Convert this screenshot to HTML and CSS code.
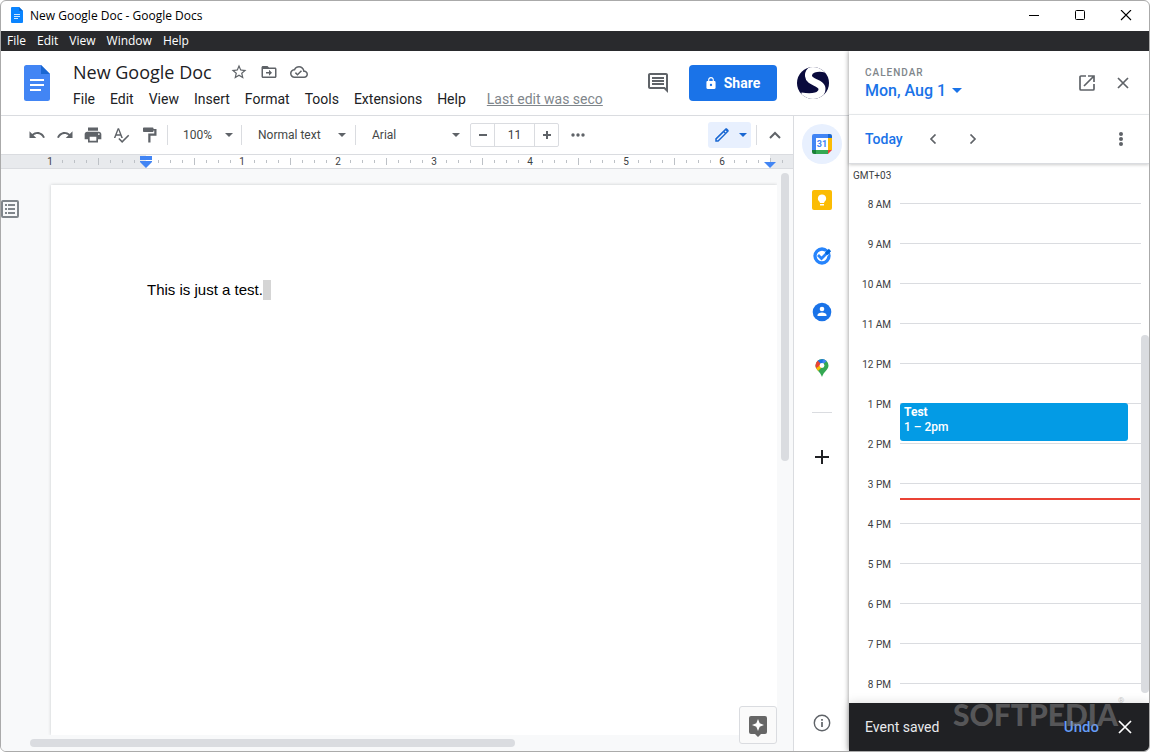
FILE: index.html
```html
<!DOCTYPE html>
<html lang="en">
<head>
<meta charset="utf-8">
<title>New Google Doc - Google Docs</title>
<link rel="stylesheet" href="styles.css">
</head>
<body>
<div class="window">
  <header class="titlebar">
    <svg class="app-icon" width="12" height="16" viewBox="0 0 12 16"><path fill="#0a84ff" d="M1 0h7l4 4v11a1 1 0 0 1-1 1H1a1 1 0 0 1-1-1V1a1 1 0 0 1 1-1z"/><path fill="#0b6bd3" d="M8 0l4 4H8z"/><path stroke="#cfe6ff" d="M3 7.500h6M3 9.500h6M3 11.500h4"/></svg>
    <span class="window-title">New Google Doc - Google Docs</span>
    <div class="window-controls">
      <button aria-label="Minimize"><svg width="12" height="12"><path stroke="#000" d="M1 5.500h10"/></svg></button>
      <button aria-label="Maximize"><svg width="12" height="12"><rect x="1.500" y=".5" width="9" height="9" rx="1" fill="none" stroke="#000"/></svg></button>
      <button aria-label="Close"><svg width="12" height="12"><path stroke="#000" stroke-width="1.100" d="M1 0l10 10M11 0L1 10"/></svg></button>
    </div>
  </header>
  <nav class="system-menu">
    <button>File</button><button>Edit</button><button>View</button><button>Window</button><button>Help</button>
  </nav>

  <div class="workspace">
    <main class="docs">
      <header class="docs-header">
        <svg class="docs-logo" width="26" height="36" viewBox="0 0 26 36"><path fill="#4285f4" d="M2.500 0H17l9 9v24.500a2.500 2.500 0 0 1-2.500 2.500h-21A2.500 2.500 0 0 1 0 33.500v-31A2.500 2.500 0 0 1 2.500 0z"/><path fill="#1967d2" d="M17 0l9 9h-9z"/><path stroke="#fff" stroke-width="2" d="M6 15h14M6 20h14M6 25h11"/></svg>
        <div class="doc-info">
          <div class="title-row">
            <h1>New Google Doc</h1>
            <button aria-label="Star"><svg width="18" height="18" viewBox="0 0 24 24"><path d="M22 9.240l-7.190-.620L12 2 9.190 8.630 2 9.240l5.460 4.730L5.820 21 12 17.270 18.180 21l-1.630-7.030L22 9.240zM12 15.400l-3.760 2.270 1-4.280-3.320-2.880 4.380-.380L12 6.100l1.710 4.040 4.380.380-3.320 2.880 1 4.280L12 15.400z"/></svg></button>
            <button aria-label="Move"><svg width="18" height="18" viewBox="0 0 24 24"><path d="M20 6h-8l-2-2H4c-1.100 0-2 .9-2 2v12c0 1.100.9 2 2 2h16c1.100 0 2-.9 2-2V8c0-1.100-.9-2-2-2zm0 12H4V8h16v10zm-8-1l4-4-4-4v3H8v2h4z"/></svg></button>
            <button aria-label="Saved to Drive"><svg width="18" height="18" viewBox="0 0 24 24"><path d="M19.350 10.040C18.670 6.590 15.640 4 12 4 9.110 4 6.600 5.640 5.350 8.040 2.340 8.360 0 10.910 0 14c0 3.310 2.690 6 6 6h13c2.760 0 5-2.240 5-5 0-2.640-2.050-4.780-4.650-4.960zM19 18H6c-2.210 0-4-1.790-4-4 0-2.050 1.530-3.760 3.560-3.970l1.070-.110.5-.950C8.080 7.140 9.940 6 12 6c2.620 0 4.880 1.860 5.390 4.430l.3 1.500 1.530.110c1.560.1 2.780 1.410 2.780 2.960 0 1.650-1.350 3-3 3zm-9-3.820l-2.090-2.090L6.500 13.500 10 17l6.010-6.010-1.410-1.410z"/></svg></button>
          </div>
          <nav class="docs-menu">
            <button>File</button><button>Edit</button><button>View</button><button>Insert</button><button>Format</button><button>Tools</button><button>Extensions</button><button>Help</button>
            <a href="#">Last edit was seco</a>
          </nav>
        </div>
        <div class="header-actions">
          <button class="icon" aria-label="Comments"><svg width="24" height="24" viewBox="0 0 24 24"><path d="M21.990 4c0-1.100-.89-2-1.990-2H4c-1.100 0-2 .9-2 2v12c0 1.100.9 2 2 2h14l4 4-.010-18zM20 4v13.170L18.830 16H4V4h16zM6 12h12v2H6zm0-3h12v2H6zm0-3h12v2H6z"/></svg></button>
          <button class="share"><svg width="10" height="12" viewBox="4 1 16 21"><path fill="#fff" d="M18 8h-1V6c0-2.760-2.240-5-5-5S7 3.240 7 6v2H6c-1.100 0-2 .9-2 2v10c0 1.100.9 2 2 2h12c1.100 0 2-.9 2-2V10c0-1.100-.9-2-2-2zm-6 9c-1.100 0-2-.9-2-2s.9-2 2-2 2 .9 2 2-.9 2-2 2zM15 8H9V6c0-1.700 1.300-3 3-3s3 1.300 3 3z"/></svg>Share</button>
          <button class="icon" aria-label="Account"><svg width="32" height="32" viewBox="0 0 32 32"><clipPath id="disc"><circle cx="16" cy="16" r="16"/></clipPath><g clip-path="url(#disc)"><path fill="#0a0b3d" d="M0 0h32v32H0z"/><path fill="none" stroke="#fff" stroke-width="7" d="M29 2C20 0 11 2 11.500 9 12 16 25 15 25 22c0 7-9 9-21 7"/></g></svg></button>
        </div>
      </header>

      <div class="docs-body">
        <section class="editor">
          <div class="toolbar">
            <div class="tool-icons">
              <button aria-label="Undo"><svg width="18" height="18" viewBox="0 0 24 24"><path d="M12.500 8c-2.650 0-5.050.990-6.900 2.600L2 7v9h9l-3.620-3.620c1.390-1.160 3.160-1.880 5.120-1.880 3.540 0 6.550 2.310 7.600 5.500l2.370-.780C21.080 11.030 17.150 8 12.500 8z"/></svg></button>
              <button aria-label="Redo"><svg width="18" height="18" viewBox="0 0 24 24"><path d="M18.400 10.600C16.550 8.990 14.150 8 11.500 8c-4.650 0-8.580 3.030-9.960 7.220L3.900 16c1.050-3.190 4.050-5.500 7.600-5.500 1.950 0 3.730.720 5.120 1.880L13 16h9V7l-3.600 3.600z"/></svg></button>
              <button aria-label="Print"><svg width="20" height="20" viewBox="0 0 24 24"><path d="M19 8H5c-1.660 0-3 1.340-3 3v6h4v4h12v-4h4v-6c0-1.660-1.340-3-3-3zm-3 11H8v-5h8v5zm3-7c-.550 0-1-.450-1-1s.450-1 1-1 1 .450 1 1-.450 1-1 1zm-1-9H6v4h12V3z"/></svg></button>
              <button aria-label="Spelling"><svg width="18" height="18" viewBox="0 0 24 24"><path d="M12.450 16h2.090L9.430 3H7.570L2.460 16h2.090l1.120-3h5.640l1.140 3zm-6.020-5L8.500 5.480 10.570 11H6.430zm15.160.590l-8.090 8.090L9.830 16l-1.410 1.410 5.090 5.090L23 13l-1.410-1.410z"/></svg></button>
              <button aria-label="Paint format"><svg width="18" height="18" viewBox="0 0 24 24"><path d="M18 4V3c0-.550-.450-1-1-1H5c-.550 0-1 .450-1 1v4c0 .550.450 1 1 1h12c.550 0 1-.450 1-1V6h1v4h-8v12h3v-9h8V4z"/></svg></button>
            </div>
            <button class="menu-button zoom">100%<svg width="8" height="4"><path d="M0 0h8L4 4z"/></svg></button>
            <button class="menu-button style">Normal text<svg width="8" height="4"><path d="M0 0h8L4 4z"/></svg></button>
            <button class="menu-button font">Arial<svg width="8" height="4"><path d="M0 0h8L4 4z"/></svg></button>
            <div class="size">
              <button aria-label="Decrease font size"><svg width="8" height="8"><path d="M0 3h8v2H0z"/></svg></button>
              <input type="text" value="11" aria-label="Font size">
              <button aria-label="Increase font size"><svg width="8" height="8"><path d="M0 3h3V0h2v3h3v2H5v3H3V5H0z"/></svg></button>
            </div>
            <button class="more" aria-label="More"><svg width="14" height="4"><circle cx="2" cy="2" r="1.700"/><circle cx="7" cy="2" r="1.700"/><circle cx="12" cy="2" r="1.700"/></svg></button>
            <button class="mode" aria-label="Editing mode"><svg width="18" height="18" viewBox="0 0 24 24"><path d="M20.410 4.940l-1.350-1.350c-.78-.78-2.050-.78-2.830 0L3 16.820V21h4.180L20.410 7.770c.79-.78.79-2.050 0-2.830zM6.400 19.100L5 19.130l.040-1.430 9.200-9.200 1.390 1.390zM16.900 8.700L15.400 7.200l1.300-1.300 1.500 1.500z"/></svg><svg width="8" height="4"><path d="M0 0h8L4 4z"/></svg></button>
            <button class="collapse" aria-label="Hide menus"><svg width="12" height="8"><path fill="none" stroke="#5f6368" stroke-width="2" d="M1 7l5-5 5 5"/></svg></button>
          </div>

          <div class="ruler">
            <svg width="0" height="0"><symbol id="ticks" viewBox="0 0 96 13"><path stroke="#bdc1c6" d="M.5 3v7M12.500 5v3M24.500 5v3M36.500 5v3M60.500 5v3M72.500 5v3M84.500 5v3"/></symbol><symbol id="ticks-start" viewBox="0 0 96 13"><path stroke="#bdc1c6" d="M60.500 5v3M72.500 5v3M84.500 5v3"/></symbol></svg>
            <div class="inch"><svg><use href="#ticks-start"/></svg><span>1</span></div>
            <div class="inch"><svg><use href="#ticks"/></svg><svg class="indent" width="12" height="12"><path fill="#4285f4" d="M0 0h12v4H0zM0 5h12v1l-6 6-6-6z"/></svg></div>
            <div class="inch"><svg><use href="#ticks"/></svg><span>1</span></div>
            <div class="inch"><svg><use href="#ticks"/></svg><span>2</span></div>
            <div class="inch"><svg><use href="#ticks"/></svg><span>3</span></div>
            <div class="inch"><svg><use href="#ticks"/></svg><span>4</span></div>
            <div class="inch"><svg><use href="#ticks"/></svg><span>5</span></div>
            <div class="inch"><svg><use href="#ticks"/></svg><span>6</span></div>
            <div class="inch outside"><svg><use href="#ticks"/></svg><svg class="right-indent" width="12" height="6"><path fill="#4285f4" d="M0 0h12L6 6z"/></svg></div>
          </div>

          <div class="canvas">
            <div class="gutter"><button aria-label="Show outline"><svg width="18" height="18"><rect x="1" y="1" width="16" height="16" rx="1" fill="none" stroke="#80868b" stroke-width="2"/><path stroke="#80868b" stroke-width="2" d="M4 5h2M7 5h7M4 9h2M7 9h7M4 13h2M7 13h7"/></svg></button></div>
            <article class="page"><p>This is just a test.<span class="caret"></span></p></article>
            <div class="vscroll"><div class="thumb"></div></div>
            <div class="hscroll"><div class="thumb"></div></div>
            <button class="explore" aria-label="Explore"><svg width="18" height="21" viewBox="0 0 18 21"><path fill="#666" d="M2 0h14a2 2 0 0 1 2 2v14a2 2 0 0 1-2 2h-4l-3 3-3-3H2a2 2 0 0 1-2-2V2a2 2 0 0 1 2-2z"/><path fill="#fff" d="M9 3l1.700 4.300L15 9l-4.300 1.700L9 15l-1.700-4.300L3 9l4.300-1.700z"/></svg></button>
          </div>
        </section>

        <aside class="side-apps">
          <button class="selected" aria-label="Calendar"><svg width="20" height="20" viewBox="0 0 20 20"><path fill="#4285f4" d="M2 0h14v4H4v12H0V2a2 2 0 0 1 2-2z"/><path fill="#1967d2" d="M16 0h2a2 2 0 0 1 2 2v2h-4z"/><path fill="#fbbc04" d="M16 4h4v12h-4z"/><path fill="#34a853" d="M4 16h12v4H4z"/><path fill="#188038" d="M0 16h4v4H2a2 2 0 0 1-2-2z"/><path fill="#ea4335" d="M16 16h4l-4 4z"/><path fill="#fff" d="M4 4h12v12H4z"/><text x="10" y="13" text-anchor="middle" class="cal-day">31</text></svg></button>
          <button aria-label="Keep"><svg width="20" height="20"><rect width="20" height="20" rx="2" fill="#fbbc04"/><path fill="#fff" d="M10 4.500a4 4 0 0 0-2.200 7.400V13h4.400v-1.100A4 4 0 0 0 10 4.500zM8 14h4v1.500H8z"/></svg></button>
          <button aria-label="Tasks"><svg width="20" height="20"><circle cx="10" cy="10" r="7" fill="none" stroke="#2684fc" stroke-width="3.300"/><path fill="none" stroke="#fff" stroke-width="5" d="M9 13l6-6"/><path fill="none" stroke="#2684fc" stroke-width="2.800" d="M6 9l3.500 3.500L17 5"/><path stroke="#0066da" stroke-width="3.200" d="M14 8l4-4"/></svg></button>
          <button aria-label="Contacts"><svg width="20" height="20"><circle cx="10" cy="10" r="9.300" fill="#1a73e8"/><circle cx="10" cy="7" r="2.300" fill="#fff"/><path fill="#fff" d="M5.500 14v-1c0-3.400 9-3.400 9 0v1z"/></svg></button>
          <button aria-label="Maps"><svg width="14" height="18" viewBox="0 0 14 18"><clipPath id="pin"><path d="M7 0a6.500 6.500 0 0 1 6.500 6.500C13.500 11 9 12 7 18 5 12 .5 11 .5 6.500A6.500 6.500 0 0 1 7 0z"/></clipPath><g clip-path="url(#pin)"><path fill="#34a853" d="M0 0h14v18H0z"/><path fill="#fbbc04" d="M0 15V9l8-5v3z"/><path fill="#ea4335" d="M0 0v10l7-5-5-5z"/><path fill="#1a73e8" d="M2 1l5 5 2-6z"/><path fill="#4285f4" d="M7 6l6-5-5-1z"/><circle cx="7" cy="6.500" r="2.400" fill="#fff"/></g></svg></button>
          <hr>
          <button aria-label="Get add-ons"><svg width="14" height="14"><path stroke="#202124" stroke-width="2" d="M0 7h14M7 0v14"/></svg></button>
          <button class="info" aria-label="Info"><svg width="18" height="18"><circle cx="9" cy="9" r="7.700" fill="none" stroke="#5f6368" stroke-width="1.400"/><path stroke="#5f6368" stroke-width="1.700" d="M9 8v5M9 5v1.700"/></svg></button>
        </aside>
      </div>
    </main>

    <aside class="calendar">
      <header class="cal-header">
        <div class="cal-titles">
          <h2>CALENDAR</h2>
          <button class="date">Mon, Aug 1<svg width="10" height="5"><path fill="#1a73e8" d="M0 0h10L5 5z"/></svg></button>
        </div>
        <button aria-label="Open in new tab"><svg width="16" height="16"><path fill="none" stroke="#5f6368" stroke-width="1.700" d="M7 1H2a1 1 0 0 0-1 1v12a1 1 0 0 0 1 1h12a1 1 0 0 0 1-1V9M9 1h6v6M15 1L5 11"/></svg></button>
        <button aria-label="Close"><svg width="12" height="12"><path stroke="#5f6368" stroke-width="1.700" d="M1 1l10 10M11 1L1 11"/></svg></button>
      </header>
      <div class="cal-nav">
        <button class="today">Today</button>
        <button aria-label="Previous day"><svg width="8" height="10"><path fill="none" stroke="#5f6368" stroke-width="1.700" d="M6.500 .5L2 5l4.500 4.500"/></svg></button>
        <button aria-label="Next day"><svg width="8" height="10"><path fill="none" stroke="#5f6368" stroke-width="1.700" d="M1.500 .5L6 5l-4.500 4.500"/></svg></button>
        <button class="options" aria-label="Options"><svg width="4" height="14"><circle cx="2" cy="2" r="2"/><circle cx="2" cy="7" r="2"/><circle cx="2" cy="12" r="2"/></svg></button>
      </div>
      <div class="schedule">
        <div class="zone">GMT+03</div>
        <div class="hours">
          <div class="hour">8 AM</div><div class="hour">9 AM</div><div class="hour">10 AM</div><div class="hour">11 AM</div><div class="hour">12 PM</div><div class="hour">1 PM</div><div class="hour">2 PM</div><div class="hour">3 PM</div><div class="hour">4 PM</div><div class="hour">5 PM</div><div class="hour">6 PM</div><div class="hour">7 PM</div><div class="hour">8 PM</div>
          <div class="event"><strong>Test</strong><span>1 – 2pm</span></div>
          <div class="now"></div>
        </div>
        <div class="cal-thumb"></div>
      </div>
      <footer class="snackbar">
        <span>Event saved</span>
        <button class="undo">Undo</button>
        <button aria-label="Dismiss"><svg width="14" height="14"><path stroke="#fff" stroke-width="1.700" d="M1 1l12 12M13 1L1 13"/></svg></button>
        <div class="watermark">SOFTPEDIA<sup>®</sup></div>
      </footer>
    </aside>
  </div>
</div>
</body>
</html>
```
FILE: styles.css
```css
* { box-sizing: border-box; }
body { margin: 0; background: #fff; font-family: Roboto, "Liberation Sans", sans-serif; color: #202124; }
button { display: flex; align-items: center; justify-content: center; padding: 0; border: 0; background: none; font: inherit; color: inherit; white-space: nowrap; }
svg { flex: none; display: block; fill: #5f6368; }
h1, h2, p { margin: 0; font-weight: 400; }

.window { display: flex; flex-direction: column; height: 100vh; border: 1px solid #aaa; border-radius: 6px; overflow: hidden; }

.titlebar { display: flex; align-items: center; height: 30px; padding: 0 0 2px 10px; gap: 7px; font: 12px "Open Sans", "Noto Sans", sans-serif; color: #000; flex: none; }
.window-controls { display: flex; margin-left: auto; }
.window-controls button { width: 46px; height: 28px; padding-top: 2px; }

.system-menu { display: flex; align-items: center; gap: 11px; height: 20px; padding: 0 0 1px 6px; flex: none; background: #292a2d; color: #fff; font: 12px "Open Sans", "Noto Sans", sans-serif; }

.workspace { display: flex; flex: 1; min-height: 0; }
.docs { display: flex; flex-direction: column; flex: 1; min-width: 0; }

.docs-header { display: flex; height: 65px; flex: none; padding-left: 23px; border-bottom: 1px solid #dadce0; }
.docs-logo { margin-top: 14px; }
.doc-info { flex: 1; min-width: 0; padding: 7px 0 0 23px; }
.title-row { display: flex; align-items: center; height: 28px; gap: 12px; }
.title-row h1 { font: 18px "Open Sans", sans-serif; margin-right: 6px; white-space: nowrap; }
.docs-menu { display: flex; align-items: center; height: 26px; gap: 15px; font-size: 14px; white-space: nowrap; }
.docs-menu a { margin-left: 6px; color: #80868b; }
.header-actions { display: flex; align-items: center; gap: 20px; padding-right: 19px; }
.header-actions .icon:first-child { margin-right: -1px; }
.share { width: 88px; height: 36px; gap: 8px; border-radius: 4px; background: #1a73e8; color: #fff; font-size: 14px; font-weight: 700; }
.header-actions { padding-right: 20px; }

.docs-body { display: flex; flex: 1; min-height: 0; }
.editor { display: flex; flex-direction: column; flex: 1; min-width: 0; }

.toolbar { display: flex; align-items: center; height: 39px; flex: none; padding-left: 22px; font-size: 12px; color: #444746; border-bottom: 1px solid #dadce0; }
.tool-icons { display: flex; align-items: center; padding-right: 4px; }
.tool-icons button { width: 28px; height: 24px; }
.menu-button { justify-content: space-between; height: 20px; border-left: 1px solid #dadce0; }
.zoom { width: 74px; padding: 0 8px 0 15px; }
.style { width: 114px; padding: 0 9px 0 16px; }
.font { width: 115px; padding: 0 10px 0 16px; }
.size { display: flex; height: 24px; border: 1px solid #dadce0; border-radius: 2px; }
.size button { width: 23px; }
.size input { width: 41px; padding: 0; border: solid #dadce0; border-width: 0 1px; text-align: center; font: 12px Roboto, sans-serif; color: #3c4043; outline: 0; }
.more { margin-left: 12px; }
.mode { width: 43px; height: 26px; margin-left: auto; gap: 8px; border-radius: 3px; background: #e8f0fe; }
.mode svg { fill: #1967d2; }
.collapse { width: 37px; height: 20px; margin-left: 5px; border-left: 1px solid #dadce0; }

.ruler { display: flex; height: 14px; flex: none; padding-left: 1px; overflow: hidden; border-bottom: 1px solid #dadce0; background: linear-gradient(to right, #e8eaed 145px, #fff 145px, #fff 769px, #e8eaed 769px); font-size: 10px; line-height: 13px; color: #3c4043; }
.ruler > svg { position: absolute; }
.inch { display: grid; flex: none; width: 96px; justify-items: center; }
.inch > * { grid-area: 1 / 1; }
.inch > svg:first-child { width: 96px; height: 13px; }
.indent { margin-top: 1px; }
.right-indent { justify-self: start; align-self: end; margin-left: -6px; }

.canvas { position: relative; display: grid; grid-template: 1fr 16px / 50px 1fr 16px; flex: 1; min-height: 0; background: #f8f9fa; }
.gutter { padding-top: 31px; }
.page { margin-top: 16px; padding: 95px 96px; background: #fff; box-shadow: 0 0 3px rgba(60, 64, 67, .25); clip-path: inset(-3px 0 0 -3px); }
.page p { display: flex; align-items: center; font: 15px/20px "Liberation Sans", Arial, sans-serif; color: #000; white-space: nowrap; }
.caret { width: 8px; height: 20px; background: #d5d5d5; }
.thumb { border-radius: 4px; background: #dadce0; }
.vscroll { padding: 4px; }
.vscroll .thumb { height: 288px; }
.hscroll { grid-column: 1 / 4; padding: 4px 29px; }
.hscroll .thumb { width: 485px; max-width: 100%; height: 8px; }
.explore { position: absolute; right: 16px; bottom: 7px; width: 38px; height: 38px; padding-top: 2px; border: 1px solid #dadce0; border-radius: 3px; background: #fafafa; }

.side-apps { display: flex; flex-direction: column; align-items: center; width: 56px; flex: none; padding: 8px 0; border-left: 1px solid #dadce0; gap: 16px; }
.side-apps button { width: 40px; height: 40px; flex: none; }
.side-apps .selected { border-radius: 50%; background: #e8f0fe; }
.side-apps hr { width: 20px; margin: 8px 0; border: 0; border-top: 1px solid #dadce0; }
.side-apps .info { margin-top: auto; }
.cal-day { font: 700 9px Roboto, sans-serif; fill: #4285f4; }

.calendar { display: flex; flex-direction: column; width: 300px; flex: none; background: #fff; box-shadow: 0 0 5px rgba(0, 0, 0, .45); clip-path: inset(0 0 0 -8px); position: relative; }
.cal-header { display: flex; align-items: center; height: 64px; flex: none; gap: 22px; padding: 0 20px 0 16px; border-bottom: 1px solid #eceff1; }
.cal-titles { flex: 1; }
.cal-titles h2 { font-size: 10px; line-height: 16px; font-weight: 500; letter-spacing: 1px; color: #80868b; }
.date { gap: 6px; font: 500 16px/20px Roboto, sans-serif; color: #1a73e8; }
.cal-nav { display: flex; align-items: center; height: 49px; flex: none; padding: 0 26px 0 16px; border-bottom: 1px solid #dadce0; box-shadow: 0 1px 3px rgba(0, 0, 0, .2); }
.cal-nav .today { margin-right: 26px; font-weight: 500; font-size: 14px; color: #1a73e8; }
.cal-nav button + button { margin-right: 32px; }
.cal-nav .options.options { margin: 0 0 0 auto; }

.schedule { position: relative; flex: 1; min-height: 0; overflow: hidden; font-size: 10px; color: #3c4043; }
.zone { height: 20px; padding-left: 4px; line-height: 24px; }
.hours { position: relative; padding-right: 8px; }
.hour { display: grid; grid-template-columns: 42px 1fr; gap: 9px; height: 40px; align-items: center; text-align: right; }
.hour::after { content: ""; height: 1px; margin-bottom: 2px; background: #dadce0; }
.event { position: absolute; top: 219px; left: 51px; right: 21px; height: 38px; display: flex; flex-direction: column; padding: 2px 4px; border-radius: 3px; background: #039be5; color: #fff; font-size: 12px; line-height: 15px; font-weight: 500; }
.now { position: absolute; top: 314px; left: 51px; right: 9px; height: 2px; background: #ea4335; }
.cal-thumb { position: absolute; top: 171px; right: 0; width: 8px; height: 358px; border-radius: 4px; background: #dadce0; }

.snackbar { position: relative; display: flex; align-items: center; height: 48px; flex: none; padding: 0 17px 0 16px; background: #202124; color: #e8eaed; font-size: 14px; box-shadow: 0 0 10px rgba(0, 0, 0, .15); }
.undo { margin: 0 19px 0 auto; font-size: 15px; font-weight: 500; color: #669df6; }
.watermark { position: absolute; top: -8px; left: 104px; display: flex; font: 900 30px/38px Lato, sans-serif; color: rgba(140, 140, 140, .5); pointer-events: none; }
.watermark sup { font: 8px/12px Roboto, sans-serif; }
```
